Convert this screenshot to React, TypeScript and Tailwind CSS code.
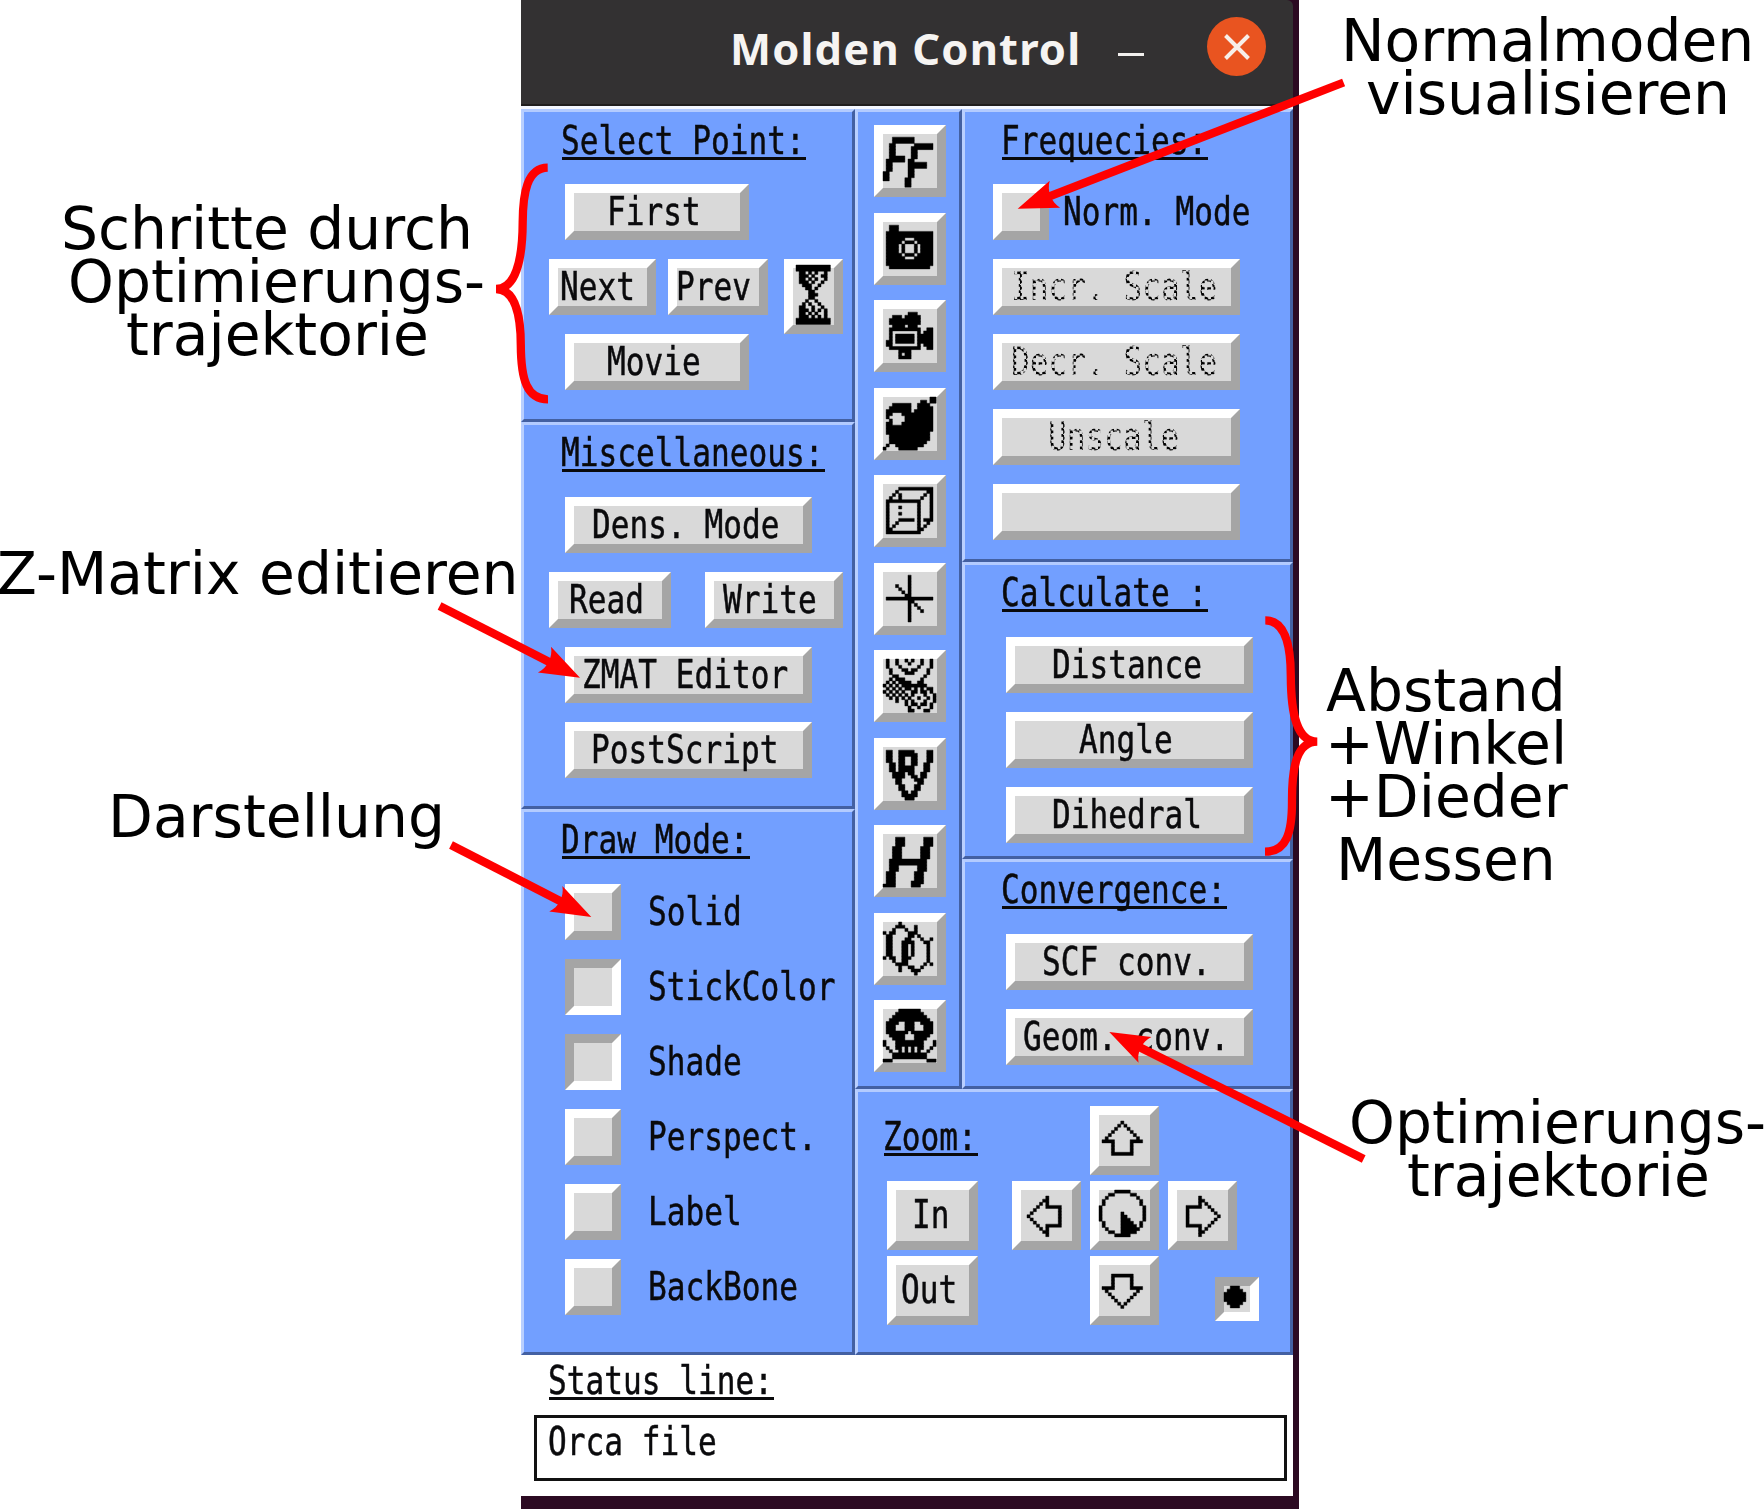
import React from "react";

const U = 3.125;
const CHAR = 18.75;

type Kids = { children?: React.ReactNode };

/* ---------- bitmaps ---------- */

const ICONS: Record<string, string[]> = {
  ff: [
    ".................",
    "...#######.......",
    "...#######.......",
    "..##......######.",
    "..##.....#######.",
    "..##.....##......",
    "..##.....##......",
    "..#####..##......",
    ".######.##.......",
    ".##.....######...",
    ".##.....######...",
    ".##.....##.......",
    "##......##.......",
    "##......##.......",
    "##.....##........",
    ".......##........",
    ".......##........",
  ],
  camera: [
    ".................",
    "..###............",
    "..###............",
    ".###############.",
    ".###############.",
    ".######...######.",
    ".#####.###.#####.",
    ".####.#...#.####.",
    ".####.#...#.####.",
    ".####.#...#.####.",
    ".#####.###.#####.",
    ".######...######.",
    ".###############.",
    ".###############.",
    "..#############..",
    ".................",
    ".................",
  ],
  movie: [
    ".................",
    "........###......",
    "...###.#####.....",
    "..##########.....",
    "..##########.....",
    "...####.###......",
    "..##########..##.",
    "..#........#.###.",
    "..#.######.#####.",
    "..#.######.#####.",
    ".##.######.#####.",
    ".##........#.###.",
    "..##########..##.",
    ".....####........",
    ".....#.##........",
    ".....####........",
    ".................",
  ],
  sphere: [
    "...............##",
    "............##.##",
    "...######..####..",
    "..#######..#####.",
    ".########.######.",
    ".##...##########.",
    ".#.....#########.",
    "..#....#########.",
    ".##...##########.",
    ".###############.",
    ".###############.",
    ".##############..",
    "..#############..",
    "..#############..",
    "..############...",
    ".#..#########....",
    "#....######......",
  ],
  cube: [
    ".................",
    ".....###########.",
    "....#.........##.",
    "...#.#.......#.#.",
    "..#..#......#..#.",
    ".###########...#.",
    ".#.........#...#.",
    ".#...#.....#...#.",
    ".#.........#...#.",
    ".#...#.....#...#.",
    ".#.........#...#.",
    ".#...#####.#.###.",
    ".#..#......#..#..",
    ".#.#.......#.#...",
    ".##........##....",
    ".###########.....",
    ".................",
  ],
  cross: [
    ".................",
    "........#........",
    "........#........",
    "........#........",
    "....#...#........",
    ".....#..#........",
    "......#.#........",
    ".......##........",
    ".###############.",
    "........##.......",
    "........#.#......",
    "........#..#.....",
    "........#...#....",
    "........#........",
    "........#........",
    "........#........",
    ".................",
  ],
  contour: [
    ".#..#..#.#..#..#.",
    ".#..#...#...#..#.",
    ".#...#.....#...#.",
    "..#...##.##...#..",
    "..#....###....#..",
    "...##........#...",
    "..#.###.....#....",
    ".#.#.####..##....",
    "#.#.#.########...",
    ".#.#.#.##.#.#.##.",
    "#.#.#.#..##.##.#.",
    ".#.#.#.#.#...#..#",
    "..#.#.#.#..#..#.#",
    "....#..#.#...#..#",
    ".......#.##.##.#.",
    "........#..#...#.",
    "........##...##..",
  ],
  vr: [
    ".................",
    ".##..#####....##.",
    ".##..######...##.",
    ".##..##..##...##.",
    ".##..##..##...##.",
    "..##.##..##..##..",
    "..##.#####...##..",
    "..##.#####...##..",
    "...####.##..##...",
    "...####..##.##...",
    "....##....###....",
    "....##.....##....",
    ".....##...##.....",
    ".....##...##.....",
    "......##.##......",
    "......#####......",
    ".......###.......",
  ],
  h: [
    ".................",
    "....###......###.",
    "....###......###.",
    "....###......###.",
    "...###......###..",
    "...###......###..",
    "...###......###..",
    "...###......###..",
    "..############...",
    "..############...",
    "..###......###...",
    "..###......###...",
    ".###......###....",
    ".###......###....",
    ".###......###....",
    ".###.....####....",
    "####.....###.....",
  ],
  rings: [
    ".....#...........",
    "....###...#......",
    "...#...#..#......",
    "#.##....###......",
    ".##.....##.#.....",
    ".##....##...#..#.",
    ".##...####...##..",
    ".##...##.#....#..",
    ".##...##.#....#..",
    ".##...##.#....#..",
    ".##...##.#....#..",
    "#.##..###.....#..",
    "...#..##......#..",
    "....####.....#.#.",
    ".....#..##..#....",
    ".....#...###.....",
    "..........#......",
  ],
  skull: [
    ".....#######.....",
    "....#########....",
    "...###########...",
    "..#############..",
    ".####..###..####.",
    ".###...###...###.",
    ".###...###...###.",
    ".#######.#######.",
    "..#####...#####..",
    "...####...####...",
    "#...#########...#",
    "#...#########...#",
    ".#..##.#.#.##..#.",
    "..#..#.#.#.#..#..",
    "...###########...",
    "...###########...",
    "###...........###",
  ],
  hourglass: [
    "###########",
    "###########",
    ".##.#.#..#.",
    ".###.#..##.",
    ".##.#.#..#.",
    ".###.#..#..",
    "..###..#...",
    "...##.#....",
    "....##.....",
    "....###....",
    "....##.....",
    "...#..#....",
    "..#.#..#...",
    ".##..#..#..",
    ".###.#.#.#.",
    ".##.#.#..#.",
    ".###.#.#.#.",
    "###########",
    "###########",
  ],
  up: [
    "......#......",
    ".....#.#.....",
    "....#...#....",
    "...#.....#...",
    "..#.......#..",
    ".#.........#.",
    "####.....####",
    "...#.....#...",
    "...#.....#...",
    "...#.....#...",
    "...#######...",
  ],
  dial: [
    ".....#####.....",
    "...##.....##...",
    "..#.........#..",
    ".#...........#.",
    ".#...........#.",
    "#.............#",
    "#.............#",
    "#......#......#",
    "#......##.....#",
    "#......###....#",
    ".#.....####..#.",
    ".#.....#####.#.",
    "..#....######..",
    "...##..#####...",
    ".....#####.....",
  ],
  dot: ["..###..", ".#####.", "#######", "#######", "#######", ".#####.", "..###.."],
};

const transpose = (rows: string[]) =>
  rows[0].split("").map((_, i) => rows.map((r) => r[i]).join(""));

ICONS.down = [...ICONS.up].reverse();
ICONS.left = transpose(ICONS.up);
ICONS.right = ICONS.left.map((r) => r.split("").reverse().join(""));

function Bitmap({ name, className = "" }: { name: string; className?: string }) {
  const rows = ICONS[name];
  let d = "";
  rows.forEach((row, y) => {
    for (const m of row.matchAll(/#+/g)) {
      d += `M${m.index} ${y}h${m[0].length}v1h-${m[0].length}z`;
    }
  });
  const w = rows[0].length;
  const h = rows.length;
  return (
    <svg
      className={`shrink-0 overflow-visible ${className}`}
      width={w * U}
      height={h * U}
      viewBox={`0 0 ${w} ${h}`}
    >
      <path d={d} fill="#000" stroke="#000" strokeWidth="0.14" />
    </svg>
  );
}

/* ---------- text ---------- */

function Label({ text, className = "", dim = false }: { text: string; className?: string; dim?: boolean }) {
  return (
    <span
      className={`block h-[38px] shrink-0 whitespace-pre font-['DejaVu_Sans_Mono',monospace] text-[38.4px] leading-[38px] text-[#0a0a0c] ${className}`}
      style={{ width: text.length * CHAR }}
    >
      <span
        className={
          dim
            ? "ml-px inline-block origin-left scale-x-[0.811] bg-[repeating-conic-gradient(#000_0_25%,transparent_0_50%)] bg-[length:7.706px_6.25px] bg-clip-text text-transparent"
            : "ml-px inline-block origin-left scale-x-[0.811] [-webkit-text-stroke:0.5px_#0a0a0c]"
        }
      >
        {text}
      </span>
    </span>
  );
}

function Heading({ text, className = "" }: { text: string; className?: string }) {
  return (
    <h2
      className={`h-[39px] shrink-0 border-b-[3px] border-[#0a0a0c] ${className}`}
      style={{ width: text.length * CHAR }}
    >
      <Label text={text} className="-ml-[2px] pt-px" />
    </h2>
  );
}

/* ---------- controls ---------- */

function Bevel({ className, pressed = false, children }: Kids & { className: string; pressed?: boolean }) {
  return (
    <button
      className={`flex shrink-0 border-[9px] bg-[#d9d9d9] ${
        pressed
          ? "border-t-[#a5a5a5] border-r-white border-b-white border-l-[#a5a5a5]"
          : "border-t-white border-r-[#a5a5a5] border-b-[#a5a5a5] border-l-white"
      } ${className}`}
    >
      {children}
    </button>
  );
}

function Toggle({ text, pressed, gap }: { text: string; pressed?: boolean; gap: string }) {
  return (
    <div className={`flex items-center ${gap}`}>
      <Bevel className="h-[56px] w-[56px]" pressed={pressed} />
      <Label text={text} />
    </div>
  );
}

function Panel({ className, children }: Kids & { className: string }) {
  return (
    <section
      className={`flex shrink-0 flex-col items-start border-[3px] border-t-[#b3cbff] border-r-[#4360a2] border-b-[#4360a2] border-l-[#b9cfff] bg-[#729fff] ${className}`}
    >
      {children}
    </section>
  );
}

/* ---------- annotations ---------- */

function Note({ className, children }: Kids & { className: string }) {
  return (
    <p
      className={`absolute whitespace-nowrap font-['DejaVu_Sans',sans-serif] text-[58.3px] leading-[53px] text-black ${className}`}
    >
      {children}
    </p>
  );
}

function Arrow({ from, to }: { from: [number, number]; to: [number, number] }) {
  const dx = from[0] - to[0];
  const dy = from[1] - to[1];
  const angle = (Math.atan2(dy, dx) * 180) / Math.PI;
  return (
    <g transform={`translate(${to[0]} ${to[1]}) rotate(${angle})`}>
      <path d={`M34 0H${Math.hypot(dx, dy)}`} stroke="#f00" strokeWidth="8.3" />
      <path d="M0 0L39.9 14.4C33.5 5.9 33.5 -5.9 39.9 -14.4Z" fill="#f00" />
    </g>
  );
}

const TOOLS = ["ff", "camera", "movie", "sphere", "cube", "cross", "contour", "vr", "h", "rings", "skull"];

export default function App() {
  return (
    <div className="relative h-[1509px] w-[1764px] overflow-hidden bg-white">
      <div className="ml-[521px] h-[1509px] w-[778px] bg-[#2c0a22]">
        <header className="flex h-[106px] w-[772px] rounded-tr-[6px] border-b-2 border-[#1f1d1d] bg-[#333132]">
          <h1 className="ml-[209px] mt-[18px] w-[360px] whitespace-nowrap font-['Noto_Sans',sans-serif] text-[43.5px] leading-[60px] font-bold tracking-[1.15px] text-[#f6f4f2]">
            Molden Control
          </h1>
          <div className="ml-[28px] mt-[53px] h-[3px] w-[26px] bg-[#f2f0ee]" />
          <div className="ml-[63px] mt-[17px] flex h-[59px] w-[59px] items-center justify-center rounded-full bg-[#e95420]">
            <svg width="26" height="26" viewBox="0 0 26 26">
              <path d="M1.5 1.5L24.5 24.5M24.5 1.5L1.5 24.5" stroke="#f7efe9" strokeWidth="4" />
            </svg>
          </div>
        </header>

        <main className="flex h-[1249px] w-[772px] border-t-[3px] border-[#f4f7ff]">
          <div className="flex w-[334px] flex-col">
            <Panel className="h-[313px]">
              <Heading text="Select Point:" className="mt-[9px] ml-[38px]" />
              <Bevel className="mt-[24px] ml-[41px] h-[56px] w-[184px]">
                <Label text="First" className="ml-[32px]" />
              </Bevel>
              <div className="mt-[19px] ml-[25px] flex h-[56px] items-start">
                <Bevel className="h-[56px] w-[107px]">
                  <Label text="Next" className="ml-px" />
                </Bevel>
                <Bevel className="ml-[12px] h-[56px] w-[100px]">
                  <Label text="Prev" className="-ml-[2px]" />
                </Bevel>
                <Bevel className="ml-[16px] h-[75px] w-[59px]">
                  <Bitmap name="hourglass" className="-mt-[3px] ml-[3px]" />
                </Bevel>
              </div>
              <Bevel className="mt-[19px] ml-[41px] h-[56px] w-[184px]">
                <Label text="Movie" className="ml-[32px]" />
              </Bevel>
            </Panel>

            <Panel className="h-[387px]">
              <Heading text="Miscellaneous:" className="mt-[8px] ml-[38px]" />
              <Bevel className="mt-[25px] ml-[41px] h-[56px] w-[247px]">
                <Label text="Dens. Mode" className="ml-[17px]" />
              </Bevel>
              <div className="mt-[19px] ml-[25px] flex">
                <Bevel className="h-[56px] w-[122px]">
                  <Label text="Read" className="ml-[10px]" />
                </Bevel>
                <Bevel className="ml-[34px] h-[56px] w-[138px]">
                  <Label text="Write" className="ml-[8px]" />
                </Bevel>
              </div>
              <Bevel className="mt-[19px] ml-[41px] h-[56px] w-[247px]">
                <Label text="ZMAT Editor" className="ml-[7px]" />
              </Bevel>
              <Bevel className="mt-[19px] ml-[41px] h-[56px] w-[247px]">
                <Label text="PostScript" className="ml-[16px]" />
              </Bevel>
            </Panel>

            <Panel className="h-[546px]">
              <Heading text="Draw Mode:" className="mt-[8px] ml-[38px]" />
              <div className="mt-[25px] ml-[41px] flex flex-col gap-[19px]">
                <Toggle text="Solid" gap="gap-[26px]" />
                <Toggle text="StickColor" gap="gap-[26px]" pressed />
                <Toggle text="Shade" gap="gap-[26px]" pressed />
                <Toggle text="Perspect." gap="gap-[26px]" />
                <Toggle text="Label" gap="gap-[26px]" />
                <Toggle text="BackBone" gap="gap-[26px]" />
              </div>
            </Panel>
          </div>

          <div className="flex w-[438px] flex-col">
            <div className="flex h-[980px]">
              <Panel className="h-[980px] w-[107px] gap-[15.5px] pt-[13px] pl-[16px]">
                {TOOLS.map((t) => (
                  <Bevel key={t} className="h-[72px] w-[72px]">
                    <Bitmap name={t} />
                  </Bevel>
                ))}
              </Panel>

              <div className="flex w-[331px] flex-col">
                <Panel className="h-[453px]">
                  <Heading text="Frequecies:" className="mt-[9px] ml-[37px]" />
                  <div className="mt-[24px] ml-[28px]">
                    <Toggle text="Norm. Mode" gap="gap-[13px]" />
                  </div>
                  <Bevel className="mt-[19px] ml-[28px] h-[56px] w-[247px]">
                    <Label text="Incr. Scale" className="ml-[8px]" dim />
                  </Bevel>
                  <Bevel className="mt-[19px] ml-[28px] h-[56px] w-[247px]">
                    <Label text="Decr. Scale" className="ml-[8px]" dim />
                  </Bevel>
                  <Bevel className="mt-[19px] ml-[28px] h-[56px] w-[247px]">
                    <Label text="Unscale" className="ml-[45px]" dim />
                  </Bevel>
                  <Bevel className="mt-[19px] ml-[28px] h-[56px] w-[247px]" />
                </Panel>

                <Panel className="h-[297px]">
                  <Heading text="Calculate :" className="mt-[8px] ml-[37px]" />
                  <Bevel className="mt-[25px] ml-[41px] h-[56px] w-[247px]">
                    <Label text="Distance" className="ml-[36px]" />
                  </Bevel>
                  <Bevel className="mt-[19px] ml-[41px] h-[56px] w-[247px]">
                    <Label text="Angle" className="ml-[63px]" />
                  </Bevel>
                  <Bevel className="mt-[19px] ml-[41px] h-[56px] w-[247px]">
                    <Label text="Dihedral" className="ml-[36px]" />
                  </Bevel>
                </Panel>

                <Panel className="h-[230px]">
                  <Heading text="Convergence:" className="mt-[8px] ml-[37px]" />
                  <Bevel className="mt-[25px] ml-[41px] h-[56px] w-[247px]">
                    <Label text="SCF conv." className="ml-[26px]" />
                  </Bevel>
                  <Bevel className="mt-[19px] ml-[41px] h-[56px] w-[247px]">
                    <Label text="Geom. conv." className="ml-[7px]" />
                  </Bevel>
                </Panel>
              </div>
            </div>

            <Panel className="h-[266px]">
              <div className="mt-[14px] ml-[26px] flex">
                <div className="flex w-[128px] flex-col">
                  <Heading text="Zoom:" className="mt-[11px]" />
                  <Bevel className="mt-[25px] ml-[3px] h-[69px] w-[91px]">
                    <Label text="In" className="mt-[6px] ml-[15px]" />
                  </Bevel>
                  <Bevel className="mt-[6px] ml-[3px] h-[69px] w-[91px]">
                    <Label text="Out" className="mt-[6px] ml-[4px]" />
                  </Bevel>
                </div>
                <div className="grid grid-cols-[69px_69px_69px] gap-x-[9px] gap-y-[6px]">
                  <Bevel className="col-start-2 h-[69px] w-[69px]">
                    <Bitmap name="up" className="mt-[6px] ml-[3px]" />
                  </Bevel>
                  <Bevel className="col-start-1 row-start-2 h-[69px] w-[69px]">
                    <Bitmap name="left" className="mt-[6px] ml-[6px]" />
                  </Bevel>
                  <Bevel className="row-start-2 h-[69px] w-[69px]">
                    <Bitmap name="dial" />
                  </Bevel>
                  <Bevel className="row-start-2 h-[69px] w-[69px]">
                    <Bitmap name="right" className="mt-[6px] ml-[9px]" />
                  </Bevel>
                  <Bevel className="col-start-2 row-start-3 h-[69px] w-[69px]">
                    <Bitmap name="down" className="mt-[9px] ml-[3px]" />
                  </Bevel>
                  <Bevel className="col-start-3 row-start-3 mt-[21px] ml-[47px] h-[44px] w-[44px]" pressed>
                    <Bitmap name="dot" />
                  </Bevel>
                </div>
              </div>
            </Panel>
          </div>
        </main>

        <footer className="flex h-[141px] w-[772px] flex-col bg-white">
          <Heading text="Status line:" className="mt-[6px] ml-[28px]" />
          <div className="mt-[15px] ml-[13px] h-[66px] w-[753px] border-[3px] border-[#111]">
            <Label text="Orca file" className="mt-[5px] ml-[10px]" />
          </div>
        </footer>
      </div>

      <Note className="top-[203px] left-[61px]">Schritte durch</Note>
      <Note className="top-[256px] left-[68px]">Optimierungs-</Note>
      <Note className="top-[309px] left-[126px]">trajektorie</Note>
      <Note className="top-[548px] left-[-3px]">Z-Matrix editieren</Note>
      <Note className="top-[791px] left-[108px]">Darstellung</Note>
      <Note className="top-[15px] left-[1341px]">Normalmoden</Note>
      <Note className="top-[68px] left-[1366px]">visualisieren</Note>
      <Note className="top-[665px] left-[1326px]">Abstand</Note>
      <Note className="top-[718px] left-[1325px]">+Winkel</Note>
      <Note className="top-[771px] left-[1325px]">+Dieder</Note>
      <Note className="top-[834px] left-[1336px]">Messen</Note>
      <Note className="top-[1097px] left-[1349px]">Optimierungs-</Note>
      <Note className="top-[1150px] left-[1407px]">trajektorie</Note>

      <svg
        className="pointer-events-none absolute inset-0"
        width="1764"
        height="1509"
        viewBox="0 0 1764 1509"
        fill="none"
      >
        <path
          d="M547.7 167.7C527 168 522.9 193 522.7 222C522.5 262 515 289 496 289C515 289 520.8 315 520.8 345C521 380 527 399.3 548 399.3"
          stroke="#f00"
          strokeWidth="8.3"
        />
        <path
          d="M1265.3 620.3C1286 620.3 1290.8 648 1290.8 676C1291 715 1297 741.7 1317.3 741.7C1297 741.7 1292 766 1292 800C1292.3 834 1286 851.7 1265 851.7"
          stroke="#f00"
          strokeWidth="8.3"
        />
        <Arrow from={[1343.6, 82.5]} to={[1017.7, 208.7]} />
        <Arrow from={[439.6, 606]} to={[580, 677.7]} />
        <Arrow from={[451, 845]} to={[591.3, 917]} />
        <Arrow from={[1363.7, 1159]} to={[1109.3, 1032]} />
      </svg>
    </div>
  );
}
